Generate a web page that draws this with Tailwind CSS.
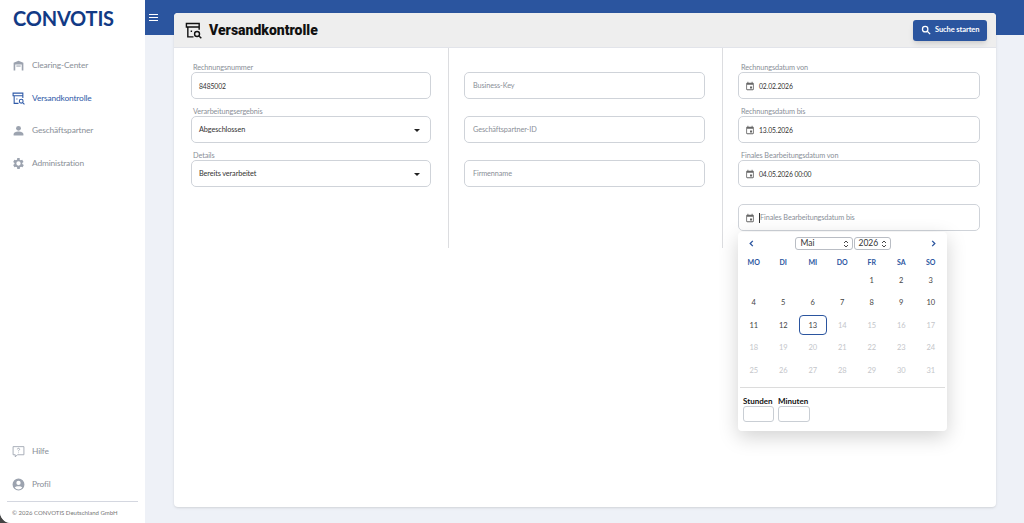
<!DOCTYPE html>
<html lang="de">

<head>
    <meta charset="UTF-8">
    <meta name="viewport" content="width=device-width, initial-scale=1.0">
    <title>Versandkontrolle</title>
    <script src="https://cdn.jsdelivr.net/npm/@tailwindcss/browser@4"></script>
</head>

<body class="h-[523px] w-[1024px] overflow-hidden bg-[#444] font-['Lato',sans-serif] text-[#333]">
    <div class="flex h-[523px] overflow-hidden rounded-bl-[11px] bg-[#eef1f7]">
        <!-- sidebar -->
        <aside class="relative flex w-[145px] shrink-0 flex-col bg-white">
            <div class="pl-[13px] pt-[5px] text-[20px] leading-[26px] font-bold tracking-[-0.2px] text-[#123a85]">CONVOTIS</div>
            <nav class="mt-[18px] flex flex-col text-[8.400px] tracking-[-0.15px] text-[#8a8f98]">
                <a class="flex h-[32.700px] items-center gap-[7px] pl-[12px]">
                    <svg class="h-[13px] w-[13px]" viewBox="0 0 24 24" fill="#9ca3af"><path d="M3 21V7l9-4 9 4v14h-3V10H6v11z"/><path d="M8 12h8v2H8z"/></svg>
                    Clearing-Center
                </a>
                <a class="flex h-[32.700px] items-center gap-[7px] pl-[12px] text-[#2f5aa8]">
                    <svg class="h-[13px] w-[13px]" viewBox="0 0 24 24" fill="none" stroke="#2f5aa8" stroke-width="2"><path d="M2 2h18v5H2zM4 7v14h8M20 7v4M8 13h2"/><circle cx="17" cy="17" r="3.5"/><path d="M20 20l3 3"/></svg>
                    Versandkontrolle
                </a>
                <a class="flex h-[32.700px] items-center gap-[7px] pl-[12px]">
                    <svg class="h-[13px] w-[13px]" viewBox="0 0 24 24" fill="#9ca3af"><circle cx="12" cy="8" r="4.5"/><path d="M3 21v-2c0-3.500 5-5 9-5s9 1.500 9 5v2z"/></svg>
                    Geschäftspartner
                </a>
                <a class="flex h-[32.700px] items-center gap-[7px] pl-[12px]">
                    <svg class="h-[13px] w-[13px]" viewBox="2.900 1.500 21 21" fill="#9ca3af"><path d="M19.400 13a7.500 7.500 0 0 0 0-2l2.100-1.600-2-3.500-2.500 1a7.600 7.600 0 0 0-1.700-1L15.400 3.200h-4l-.4 2.700a7.600 7.600 0 0 0-1.700 1l-2.500-1-2 3.500L6.900 11a7.500 7.500 0 0 0 0 2l-2.100 1.600 2 3.500 2.500-1a7.600 7.600 0 0 0 1.700 1l.4 2.700h4l.4-2.700a7.600 7.600 0 0 0 1.700-1l2.500 1 2-3.500zM13.400 15.500a3.500 3.500 0 1 1 0-7 3.500 3.500 0 0 1 0 7z"/></svg>
                    Administration
                </a>
            </nav>
            <div class="mt-auto flex flex-col text-[8.400px] tracking-[-0.15px] text-[#8a8f98]">
                <a class="flex h-[33px] items-center gap-[7px] pl-[12px]">
                    <svg class="h-[13px] w-[13px]" viewBox="0 0 24 24" fill="none" stroke="#9ca3af" stroke-width="1.600"><path d="M2 3h20v15H10l-4 4v-4H2z"/><path d="M10 8a2 2 0 1 1 3 1.700c-.7.400-1 .8-1 1.800M12 14v1"/></svg>
                    Hilfe
                </a>
                <a class="flex h-[33px] items-center gap-[7px] pl-[12px]">
                    <svg class="h-[13px] w-[13px]" viewBox="0 0 24 24" fill="#9ca3af"><path d="M12 1a11 11 0 1 0 0 22 11 11 0 0 0 0-22zm0 4a4 4 0 1 1 0 8 4 4 0 0 1 0-8zm0 16a9 9 0 0 1-7-3.400c.8-1.800 4-2.600 7-2.600s6.200.8 7 2.600A9 9 0 0 1 12 21z"/></svg>
                    Profil
                </a>
                <div class="mx-[7px] border-t border-[#d4d7e0] pb-[3px] pl-[5px] pt-[4px] text-[6px] leading-[14px] tracking-normal text-[#777]">© 2026 CONVOTIS Deutschland GmbH</div>
            </div>
        </aside>

        <!-- main -->
        <main class="relative flex-1">
            <div class="flex h-[35px] items-start bg-[#2b559f] pl-[4px] pt-[13px]">
                <svg class="h-[9px] w-[9px]" viewBox="0 0 9 9" fill="#fff"><path d="M0 1h9v1H0zM0 4h9v1H0zM0 7h9v1H0z"/></svg>
            </div>
            <section class="absolute left-[29px] top-[13px] flex h-[494px] w-[822px] flex-col overflow-hidden rounded-[4px] bg-white shadow-sm">
                <header class="flex h-[35px] shrink-0 items-center justify-between border-b border-[#e2e4ea] bg-[#eeeeee] pl-[11px] pr-[9px]">
                    <div class="flex items-center gap-[7px]">
                        <svg class="h-[17px] w-[17px]" viewBox="0 0 24 24" fill="none" stroke="#111" stroke-width="2"><path d="M2 2h18v5H2zM4 7v14h8M20 7v4M8 13h2"/><circle cx="17" cy="17" r="3.500"/><path d="M20 20l3 3"/></svg>
                        <h1 class="pt-[1px] font-['Roboto',sans-serif] text-[14px] font-black text-[#111]">Versandkontrolle</h1>
                    </div>
                    <button class="flex h-[21px] w-[74px] items-center gap-[4px] whitespace-nowrap rounded-[3px] bg-[#2b559f] pl-[8px] text-[7.500px] font-bold tracking-[-0.1px] text-white shadow-md">
                        <svg class="h-[10px] w-[10px]" viewBox="0 0 24 24" fill="none" stroke="#fff" stroke-width="3"><circle cx="10" cy="10" r="6.500"/><path d="M15 15l7 7"/></svg>
                        Suche starten
                    </button>
                </header>
                <div class="grid h-[200px] grid-cols-[275px_274px_273px] text-[7.300px] tracking-[-0.1px]">
                    <div class="border-r border-[#dcdde0] pl-[17px] pr-[17px] pt-[15px]">
                        <p class="pl-[2px] leading-[9px] text-[#8a8f98]">Rechnungsnummer</p>
                        <div class="flex h-[27px] items-center rounded-[5px] border border-[#cfd3d9] pl-[7px] pt-[2px] text-[6.800px] text-[#333]">8485002</div>
                        <p class="mt-[8px] pl-[2px] leading-[9px] text-[#8a8f98]">Verarbeitungsergebnis</p>
                        <div class="flex h-[27px] items-center justify-between rounded-[5px] border border-[#cfd3d9] pl-[7px] pr-[10px] pt-[2px]">Abgeschlossen<span class="h-0 w-0 border-x-[3.500px] border-t-[3.500px] border-x-transparent border-t-[#222]"></span></div>
                        <p class="mt-[8px] pl-[2px] leading-[9px] text-[#8a8f98]">Details</p>
                        <div class="flex h-[27px] items-center justify-between rounded-[5px] border border-[#cfd3d9] pl-[7px] pr-[10px] pt-[2px]">Bereits verarbeitet<span class="h-0 w-0 border-x-[3.500px] border-t-[3.500px] border-x-transparent border-t-[#222]"></span></div>
                    </div>
                    <div class="border-r border-[#dcdde0] pl-[15px] pr-[17px] pt-[24px] text-[#8a8f98]">
                        <div class="flex h-[27px] items-center rounded-[5px] border border-[#cfd3d9] pl-[8px] pt-[2px]">Business-Key</div>
                        <div class="mt-[17px] flex h-[27px] items-center rounded-[5px] border border-[#cfd3d9] pl-[8px] pt-[2px]">Geschäftspartner-ID</div>
                        <div class="mt-[17px] flex h-[27px] items-center rounded-[5px] border border-[#cfd3d9] pl-[8px] pt-[2px]">Firmenname</div>
                    </div>
                    <div class="pl-[15px] pr-[16px] pt-[15px]">
                        <p class="pl-[3px] leading-[9px] text-[#8a8f98]">Rechnungsdatum von</p>
                        <div class="flex h-[27px] items-center gap-[4px] rounded-[5px] border border-[#cfd3d9] pl-[6px] text-[6.800px]">
                            <svg class="h-[10px] w-[10px]" viewBox="0 0 24 24" fill="#666"><path d="M19 4h-1V2h-2v2H8V2H6v2H5a2 2 0 0 0-2 2v14a2 2 0 0 0 2 2h14a2 2 0 0 0 2-2V6a2 2 0 0 0-2-2zm0 16H5V9h14zM12 13h5v5h-5z"/></svg>
                            <span class="pt-[2px]">02.02.2026</span>
                        </div>
                        <p class="mt-[8px] pl-[3px] leading-[9px] text-[#8a8f98]">Rechnungsdatum bis</p>
                        <div class="flex h-[27px] items-center gap-[4px] rounded-[5px] border border-[#cfd3d9] pl-[6px] text-[6.800px]">
                            <svg class="h-[10px] w-[10px]" viewBox="0 0 24 24" fill="#666"><path d="M19 4h-1V2h-2v2H8V2H6v2H5a2 2 0 0 0-2 2v14a2 2 0 0 0 2 2h14a2 2 0 0 0 2-2V6a2 2 0 0 0-2-2zm0 16H5V9h14zM12 13h5v5h-5z"/></svg>
                            <span class="pt-[2px]">13.05.2026</span>
                        </div>
                        <p class="mt-[8px] pl-[3px] leading-[9px] text-[#8a8f98]">Finales Bearbeitungsdatum von</p>
                        <div class="flex h-[27px] items-center gap-[4px] rounded-[5px] border border-[#cfd3d9] pl-[6px] text-[6.800px]">
                            <svg class="h-[10px] w-[10px]" viewBox="0 0 24 24" fill="#666"><path d="M19 4h-1V2h-2v2H8V2H6v2H5a2 2 0 0 0-2 2v14a2 2 0 0 0 2 2h14a2 2 0 0 0 2-2V6a2 2 0 0 0-2-2zm0 16H5V9h14zM12 13h5v5h-5z"/></svg>
                            <span class="pt-[2px]">04.05.2026 00:00</span>
                        </div>
                        <div class="mt-[17px] flex h-[27px] items-center gap-[4px] rounded-[5px] border border-[#cfd3d9] pl-[6px] text-[#8a8f98]">
                            <svg class="h-[10px] w-[10px]" viewBox="0 0 24 24" fill="#666"><path d="M19 4h-1V2h-2v2H8V2H6v2H5a2 2 0 0 0-2 2v14a2 2 0 0 0 2 2h14a2 2 0 0 0 2-2V6a2 2 0 0 0-2-2zm0 16H5V9h14zM12 13h5v5h-5z"/></svg>
                            <span class="border-l border-[#333] leading-[10px]">Finales Bearbeitungsdatum bis</span>
                        </div>
                    </div>
                </div>
            </section>

            <!-- date picker -->
            <div class="absolute left-[593px] top-[232px] h-[199px] w-[209px] rounded-[4px] bg-white text-[7.500px] shadow-[0_6px_20px_rgba(0,0,0,0.18)]">
                <div class="flex h-[22px] items-center justify-between pl-[11px] pr-[11px] pt-[1px]">
                    <svg class="h-[7px] w-[5px]" viewBox="0 0 5 8" fill="none" stroke="#2b559f" stroke-width="1.500"><path d="M4 1L1 4l3 3"/></svg>
                    <div class="flex gap-[1px] text-[8.500px]">
                        <div class="flex h-[13px] w-[58px] items-center justify-between rounded-[3px] border border-[#b9bdc4] pl-[5px] pr-[3px]">Mai
                            <svg class="h-[8px] w-[6px]" viewBox="0 0 6 8" fill="none" stroke="#333" stroke-width="0.900"><path d="M1 3l2-2 2 2M1 5l2 2 2-2"/></svg>
                        </div>
                        <div class="flex h-[13px] w-[37px] items-center justify-between rounded-[3px] border border-[#b9bdc4] pl-[4px] pr-[3px]">2026
                            <svg class="h-[8px] w-[6px]" viewBox="0 0 6 8" fill="none" stroke="#333" stroke-width="0.900"><path d="M1 3l2-2 2 2M1 5l2 2 2-2"/></svg>
                        </div>
                    </div>
                    <svg class="h-[7px] w-[5px]" viewBox="0 0 5 8" fill="none" stroke="#2b559f" stroke-width="1.500"><path d="M1 1l3 3-3 3"/></svg>
                </div>
                <div class="grid grid-cols-[repeat(7,29.500px)] pl-[1px] text-center">
                    <span class="h-[15px] pt-[3px] text-[7px] font-bold leading-[10px] text-[#2b559f]">MO</span>
                    <span class="h-[15px] pt-[3px] text-[7px] font-bold leading-[10px] text-[#2b559f]">DI</span>
                    <span class="h-[15px] pt-[3px] text-[7px] font-bold leading-[10px] text-[#2b559f]">MI</span>
                    <span class="h-[15px] pt-[3px] text-[7px] font-bold leading-[10px] text-[#2b559f]">DO</span>
                    <span class="h-[15px] pt-[3px] text-[7px] font-bold leading-[10px] text-[#2b559f]">FR</span>
                    <span class="h-[15px] pt-[3px] text-[7px] font-bold leading-[10px] text-[#2b559f]">SA</span>
                    <span class="h-[15px] pt-[3px] text-[7px] font-bold leading-[10px] text-[#2b559f]">SO</span>
                </div>
                <div class="grid grid-cols-[repeat(7,29.500px)] grid-rows-[repeat(5,22.600px)] items-center justify-items-center pl-[1px] text-[#444]">
                    <span></span><span></span><span></span><span></span><span>1</span><span>2</span><span>3</span>
                    <span>4</span><span>5</span><span>6</span><span>7</span><span>8</span><span>9</span><span>10</span>
                    <span>11</span><span>12</span>
                    <span class="flex h-[20px] w-[28px] items-center justify-center rounded-[4px] border-[1.500px] border-[#2b559f]">13</span>
                    <span class="text-[#c4c6ca]">14</span><span class="text-[#c4c6ca]">15</span><span class="text-[#c4c6ca]">16</span><span class="text-[#c4c6ca]">17</span>
                    <span class="text-[#c4c6ca]">18</span><span class="text-[#c4c6ca]">19</span><span class="text-[#c4c6ca]">20</span><span class="text-[#c4c6ca]">21</span><span class="text-[#c4c6ca]">22</span><span class="text-[#c4c6ca]">23</span><span class="text-[#c4c6ca]">24</span>
                    <span class="text-[#c4c6ca]">25</span><span class="text-[#c4c6ca]">26</span><span class="text-[#c4c6ca]">27</span><span class="text-[#c4c6ca]">28</span><span class="text-[#c4c6ca]">29</span><span class="text-[#c4c6ca]">30</span><span class="text-[#c4c6ca]">31</span>
                </div>
                <div class="mx-[2px] mt-[5px] border-t border-[#dcdcdc] pl-[3px] pt-[9px]">
                    <div class="flex gap-[4px] text-[8px] font-bold text-[#111]">
                        <div class="w-[31px]"><p class="leading-[9px]">Stunden</p><div class="h-[16px] rounded-[3px] border border-[#c9ced4]"></div></div>
                        <div class="w-[32px]"><p class="leading-[9px]">Minuten</p><div class="h-[16px] rounded-[3px] border border-[#c9ced4]"></div></div>
                    </div>
                </div>
            </div>
        </main>
    </div>
</body>

</html>
